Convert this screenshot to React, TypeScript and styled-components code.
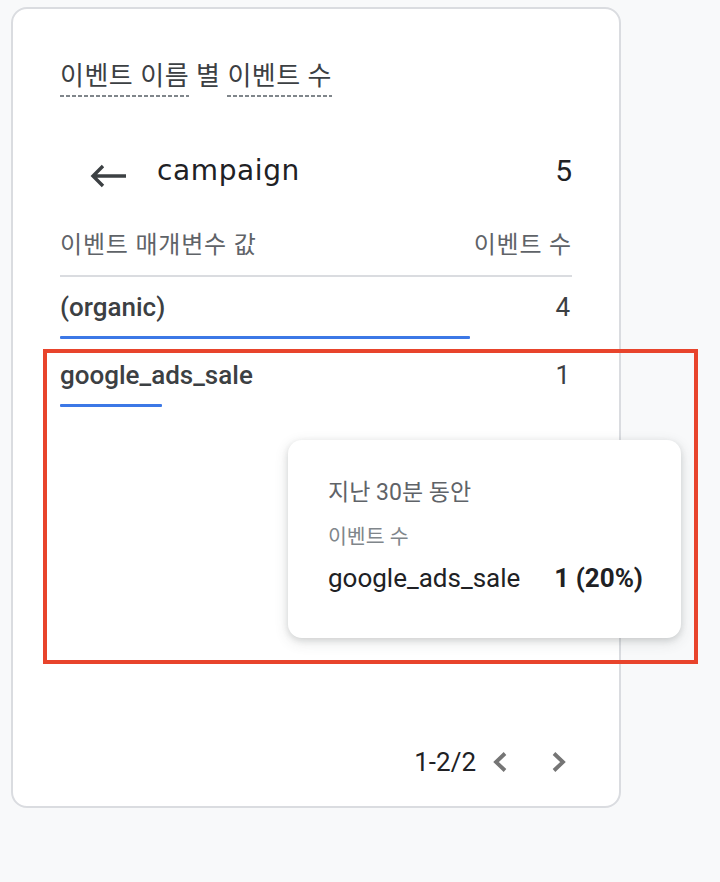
import React from "react"
import styled, { createGlobalStyle } from "styled-components"

const GlobalStyle = createGlobalStyle`
  html, body {
    margin: 0;
    padding: 0;
    background: #f8f9fa;
  }
  body {
    font-family: Roboto, "Noto Sans CJK KR", sans-serif;
  }
`

const Page = styled.div`
  padding: 7px 0 0 11px;
  min-height: 875px;
`

const Card = styled.section`
  position: relative;
  box-sizing: border-box;
  width: 610px;
  height: 801px;
  border: 2px solid #dadce0;
  border-radius: 16px;
  background: #fff;
  padding: 0 47px;
  display: flex;
  flex-direction: column;
`

const Title = styled.h2`
  margin: 51px 0 0;
  font-size: 26px;
  font-weight: 400;
  line-height: 32px;
  color: #3c4043;
  letter-spacing: 0.5px;
`

const Dashed = styled.span`
  display: inline-block;
  padding-bottom: 5px;
  background-image: repeating-linear-gradient(
    to right,
    #80868b 0,
    #80868b 4px,
    transparent 4px,
    transparent 6px
  );
  background-size: 100% 2px;
  background-repeat: no-repeat;
  background-position: bottom left;
`

const DimensionRow = styled.div`
  margin-top: 45px;
  height: 56px;
  display: flex;
  align-items: center;
`

const BackButton = styled.button`
  border: none;
  background: none;
  padding: 0;
  margin: 12px 30px 0 30px;
  width: 37px;
  height: 24px;
  display: flex;
  cursor: pointer;
`

const DimensionName = styled.div`
  flex: 1;
  font-family: "DejaVu Sans", Roboto, sans-serif;
  font-size: 28px;
  letter-spacing: 0.6px;
  color: #202124;
`

const Total = styled.div`
  font-size: 30px;
  color: #202124;
`

const HeaderRow = styled.div`
  margin-top: 25px;
  display: flex;
  justify-content: space-between;
  font-size: 24px;
  line-height: 44px;
  letter-spacing: 0.8px;
  color: #5f6368;
  padding-bottom: 8px;
  border-bottom: 2px solid #dadce0;
`

const Rows = styled.div`
  display: flex;
  flex-direction: column;
  margin-top: 12px;
  gap: 18px;
`

const Row = styled.div`
  display: flex;
  flex-direction: column;
`

const RowLine = styled.div`
  display: flex;
  justify-content: space-between;
  font-size: 26px;
  line-height: 36px;
  color: #3c4043;
`

const RowLabel = styled.span`
  font-weight: 500;
`

const RowValue = styled.span`
  font-weight: 400;
  padding-right: 2px;
`

const Bar = styled.div`
  margin-top: 11px;
  height: 3px;
  background: #3c78e6;
  border-radius: 1px;
`

const Pager = styled.div`
  margin-top: auto;
  margin-bottom: 24px;
  margin-right: -7px;
  height: 40px;
  display: flex;
  justify-content: flex-end;
  align-items: center;
  font-size: 26px;
  color: #202124;
`

const PagerButton = styled.button<{ $gap?: number }>`
  border: none;
  background: none;
  padding: 0;
  margin-left: ${p => p.$gap ?? 0}px;
  width: 40px;
  height: 40px;
  display: flex;
  align-items: center;
  justify-content: center;
  cursor: pointer;
`

const Highlight = styled.div`
  position: absolute;
  left: 30px;
  top: 340px;
  width: 655px;
  height: 315px;
  box-sizing: border-box;
  border: 4px solid #e8442c;
  pointer-events: none;
`

const Tooltip = styled.div`
  position: absolute;
  left: 275px;
  top: 431px;
  width: 393px;
  height: 198px;
  box-sizing: border-box;
  padding: 38px 0 0 40px;
  background: #fff;
  border-radius: 14px;
  box-shadow: 0 2px 6px rgba(60, 64, 67, 0.15), 0 4px 14px rgba(60, 64, 67, 0.15);
`

const TipPeriod = styled.div`
  font-size: 23px;
  line-height: 30px;
  color: #5f6368;
`

const TipMetric = styled.div`
  margin-top: 14px;
  font-size: 20.5px;
  line-height: 30px;
  color: #80868b;
`

const TipLine = styled.div`
  margin-top: 11px;
  display: flex;
  gap: 34px;
  white-space: nowrap;
  font-size: 26px;
  line-height: 30px;
  color: #202124;
  & > b {
    font-weight: 700;
  }
`

const ArrowBack = () => (
  <svg width="37" height="24" viewBox="0 0 37 24" fill="none">
    <path
      d="M36 12H3M13 2L3 12l10 10"
      stroke="#3c4043"
      strokeWidth="3.4"
    />
  </svg>
)

const Chevron = ({ dir }: { dir: "left" | "right" }) => (
  <svg width="20" height="22" viewBox="0 0 20 22" fill="none">
    <path
      d={dir === "left" ? "M15 2.5L6 11l9 8.5" : "M5 2.5l9 8.5-9 8.5"}
      stroke="#757575"
      strokeWidth="3.8"
    />
  </svg>
)

const rows = [
  { label: "(organic)", value: 4 },
  { label: "google_ads_sale", value: 1 },
]
const total = rows.reduce((s, r) => s + r.value, 0)

const App: React.FC = () => {
  return (
    <Page>
      <GlobalStyle />
      <Card>
        <Title>
          <Dashed>이벤트 이름</Dashed> 별 <Dashed>이벤트 수</Dashed>
        </Title>
        <DimensionRow>
          <BackButton aria-label="뒤로">
            <ArrowBack />
          </BackButton>
          <DimensionName>campaign</DimensionName>
          <Total>{total}</Total>
        </DimensionRow>
        <HeaderRow>
          <span>이벤트 매개변수 값</span>
          <span>이벤트 수</span>
        </HeaderRow>
        <Rows>
          {rows.map(r => (
            <Row key={r.label}>
              <RowLine>
                <RowLabel>{r.label}</RowLabel>
                <RowValue>{r.value}</RowValue>
              </RowLine>
              <Bar style={{ width: `${(r.value / total) * 100}%` }} />
            </Row>
          ))}
        </Rows>
        <Pager>
          <span>1-2/2</span>
          <PagerButton $gap={4} aria-label="이전">
            <Chevron dir="left" />
          </PagerButton>
          <PagerButton $gap={19} aria-label="다음">
            <Chevron dir="right" />
          </PagerButton>
        </Pager>
        <Highlight />
        <Tooltip>
          <TipPeriod>지난 30분 동안</TipPeriod>
          <TipMetric>이벤트 수</TipMetric>
          <TipLine>
            <span>google_ads_sale</span>
            <b>1 (20%)</b>
          </TipLine>
        </Tooltip>
      </Card>
    </Page>
  )
}

export default App
